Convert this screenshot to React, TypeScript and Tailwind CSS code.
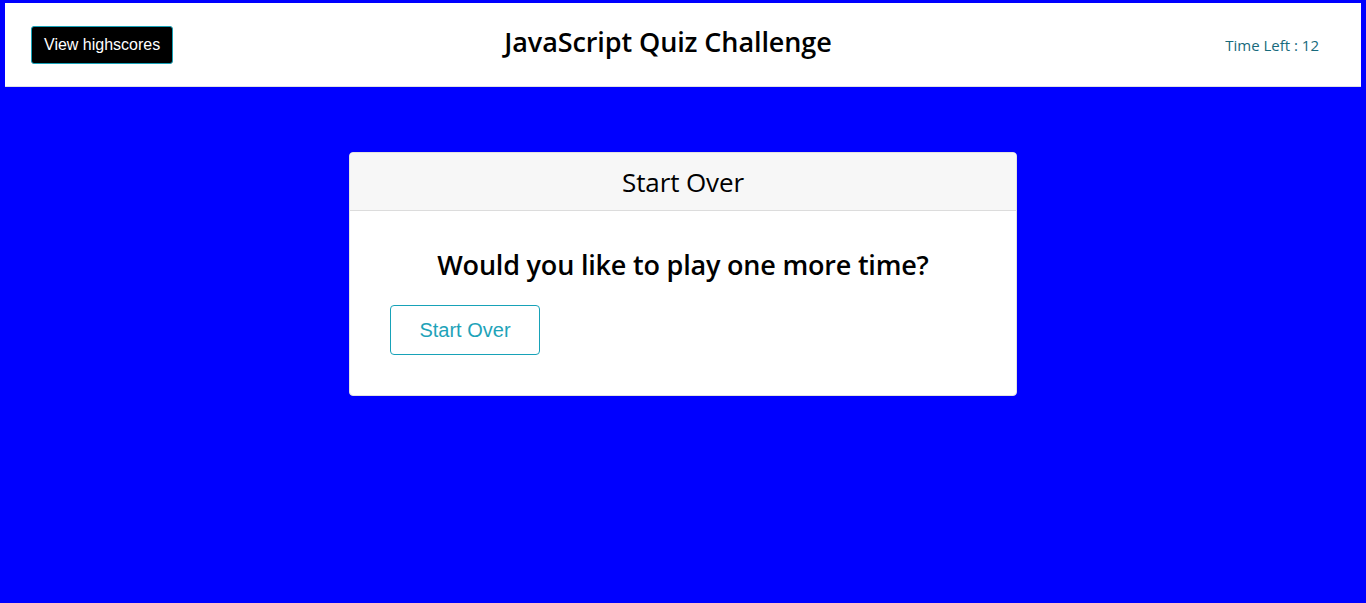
import React, { JSX } from 'react';

const font = { fontFamily: '"Open Sans", "Noto Sans", sans-serif' };

export default function App(): JSX.Element {
  return (
    <div className="min-h-screen bg-[#0000ff] px-[5px] pt-[3px]" style={font}>
      <header className="flex h-[84px] items-center border-b border-[#dee2e6] bg-white">
        <div className="w-[170px] shrink-0 pl-[26px]">
          <button className="rounded-[3px] border border-[#17a2b8] bg-black px-3 py-[6px] text-[16px] leading-6 text-white font-['Liberation_Sans',Arial,sans-serif]">
            View highscores
          </button>
        </div>
        <h1 className="flex-1 pb-[4px] text-center text-[27px] font-semibold tracking-[-0.1px] text-black">
          JavaScript Quiz Challenge
        </h1>
        <div className="w-[200px] shrink-0 pr-[42px] pt-[2px] text-right text-[15px] text-[#176a7c]">
          Time Left : 12
        </div>
      </header>

      <main className="flex justify-center pt-[65px]">
        <div className="w-[668px] overflow-hidden rounded-[4px] border border-[#e2e2e2] bg-white">
          <div className="flex h-[58px] items-center justify-center border-b border-[#dcdcdc] bg-[#f7f7f7]">
            <h2 className="pt-[2px] text-[26px] font-normal tracking-[-0.1px] text-black">Start Over</h2>
          </div>
          <div className="px-[40px] pb-[40px] pt-[36px]">
            <h3 className="text-center text-[27px] font-semibold leading-[36px] tracking-[-0.2px] text-black">
              Would you like to play one more time?
            </h3>
            <button className="mt-[22px] h-[50px] w-[150px] rounded-[4px] border border-[#17a2b8] bg-white text-[20px] text-[#1ea3b9] font-['Liberation_Sans',Arial,sans-serif]">
              Start Over
            </button>
          </div>
        </div>
      </main>
    </div>
  );
}
